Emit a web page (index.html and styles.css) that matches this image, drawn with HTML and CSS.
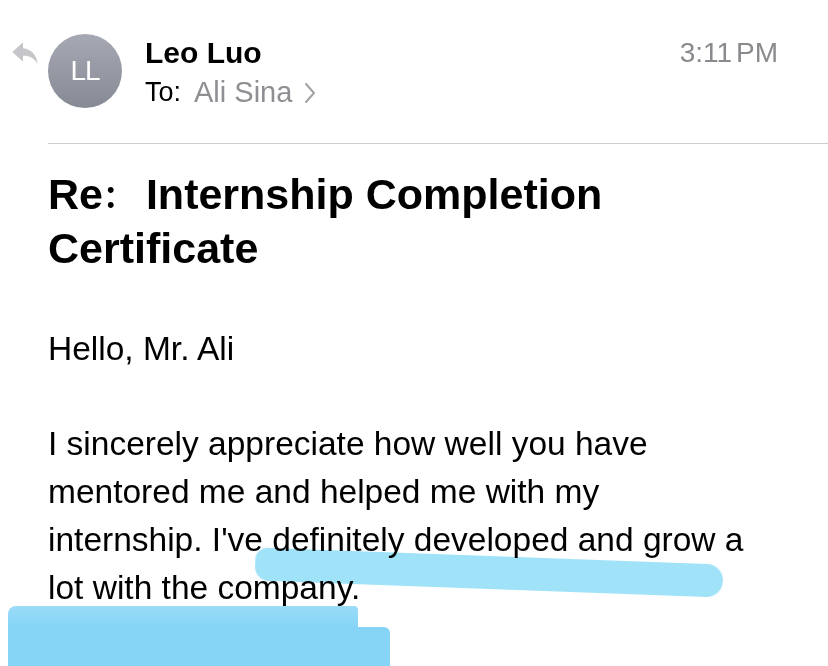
FILE: index.html
```html
<!DOCTYPE html>
<html lang="en">
<head>
<meta charset="utf-8">
<title>Re: Internship Completion Certificate</title>
<link rel="stylesheet" href="styles.css">
</head>
<body>
<div class="screen">
  <header class="header">
    <svg class="reply" viewBox="0 0 26 22" width="26" height="22" aria-hidden="true">
      <path d="M11 0.3 L0.3 10 L11 19.7 V13.8 C17 13.5 22 16 25.7 21.7 C25 14 20 7 11 6.2 Z" fill="#c6c6ca"/>
    </svg>
    <div class="avatar">LL</div>
    <div class="who">
      <div class="name">Leo Luo</div>
      <div class="to"><span class="to-label">To:</span> <span class="to-name">Ali Sina</span> <svg class="chev" viewBox="0 0 12 22" width="12" height="22" aria-hidden="true"><path d="M2 2 L10 11 L2 20" fill="none" stroke="#a2a2a6" stroke-width="2" stroke-linecap="round" stroke-linejoin="round"/></svg></div>
    </div>
    <div class="time">3:11<span class="thin"> </span>PM</div>
  </header>
  <div class="rule"></div>
  <h1 class="subject">Re<span class="fwc">：</span> Internship Completion Certificate</h1>
  <div class="body">
    <p>Hello, Mr. Ali</p>
    <p>I sincerely appreciate how well you have mentored me and helped me with my internship. I've definitely developed and grow a lot with the company.</p>
  </div>
  <div class="mark mark-one"></div>
  <div class="mark mark-two"></div>
  <div class="mark mark-three"></div>
</div>
</body>
</html>
```

FILE: styles.css
```css
html, body {
  margin: 0;
  padding: 0;
  background: #ffffff;
  overflow: hidden;
}
.screen {
  position: relative;
  width: 828px;
  height: 666px;
  overflow: hidden;
  font-family: "Liberation Sans", Arial, sans-serif;
  color: #000;
}
.header {
  display: flex;
  align-items: flex-start;
  padding: 34px 50px 0 12px;
  height: 143px;
  box-sizing: border-box;
}
.reply {
  margin-top: 8px;
  flex: none;
}
.avatar {
  flex: none;
  width: 74px;
  height: 74px;
  margin-left: 10px;
  border-radius: 50%;
  background: linear-gradient(#a6a9b3, #868a95);
  color: #fff;
  font-size: 28px;
  letter-spacing: -1px;
  display: flex;
  align-items: center;
  justify-content: center;
}
.who {
  margin-left: 23px;
  flex: 1;
}
.name {
  font-weight: bold;
  font-size: 30px;
  line-height: 34px;
  margin-top: 2px;
}
.to {
  font-size: 27px;
  line-height: 34px;
  margin-top: 5px;
  display: flex;
  align-items: center;
}
.to-label { color: #000; margin-right: 13px; }
.to-name { color: #8e8e93; margin-right: 12px; font-size: 29px; }
.chev { margin-top: 2px; }
.time {
  font-size: 28px;
  line-height: 34px;
  color: #8a8a8e;
  margin-top: 2px;
}
.thin { font-size: 14px; }
.rule {
  margin-left: 48px;
  height: 1px;
  background: #cfcfd2;
}
.subject {
  margin: 23px 30px 0 48px;
  font-size: 43px;
  line-height: 54px;
  font-weight: bold;
}
.fwc {
  font-family: "Noto Sans CJK SC", sans-serif;
  font-weight: bold;
  font-size: 31px;
  line-height: 1;
  vertical-align: 2px;
}
.body {
  margin: 50px 0 0 48px;
  width: 706px;
  font-size: 33.5px;
  line-height: 47.7px;
}
.body p {
  margin: 0 0 47.7px 0;
}
.mark {
  position: absolute;
}
.mark-one {
  left: 255px;
  top: 556px;
  width: 468px;
  height: 33px;
  background: #a0e2f8;
  border-radius: 12px 16px 16px 14px;
  transform: rotate(2.1deg);
  transform-origin: center;
  filter: blur(0.6px);
  mix-blend-mode: multiply;
}
.mark-two {
  left: 8px;
  top: 606px;
  width: 350px;
  height: 70px;
  background: linear-gradient(#9adcf8, #86d5f6 30%);
  border-radius: 8px 4px 0 0;
  filter: blur(0.6px);
}
.mark-three {
  left: 8px;
  top: 627px;
  width: 382px;
  height: 50px;
  background: #86d5f6;
  border-radius: 4px 6px 0 0;
  filter: blur(0.6px);
}
```
